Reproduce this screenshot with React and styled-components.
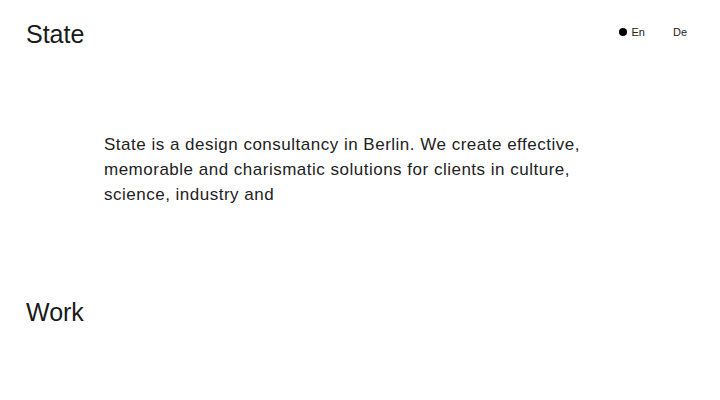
import React from "react";
import styled, { createGlobalStyle } from "styled-components";

const Global = createGlobalStyle`
  html, body { margin: 0; padding: 0; background: #fff; }
  body { font-family: "Liberation Sans", Arial, sans-serif; color: #1a1a1a; }
`;

const Page = styled.div`
  width: 720px;
  min-height: 400px;
  box-sizing: border-box;
  padding: 19px 33px 0 26px;
`;

const Header = styled.header`
  display: flex;
  justify-content: space-between;
  align-items: flex-start;
`;

const Logo = styled.h1`
  margin: 0;
  font-size: 25px;
  font-weight: 300;
  line-height: 30px;
`;

const Lang = styled.nav`
  display: flex;
  gap: 28px;
  padding-top: 7px;
  font-size: 11px;
  color: #222;
`;

const LangItem = styled.span`
  display: flex;
  align-items: center;
  gap: 4px;
  &::before {
    content: "";
    width: 8px;
    height: 8px;
    border-radius: 50%;
    background: #000;
    display: ${(p) => (p.$active ? "block" : "none")};
  }
`;

const Intro = styled.p`
  margin: 83px 0 0 78px;
  width: 500px;
  font-size: 17px;
  line-height: 25px;
  letter-spacing: 0.5px;
  color: #222;
`;

const Section = styled.h2`
  margin: 90px 0 0;
  font-size: 25px;
  font-weight: 300;
  line-height: 30px;
`;

export default function App() {
  return (
    <>
      <Global />
      <Page>
        <Header>
          <Logo>State</Logo>
          <Lang>
            <LangItem $active>En</LangItem>
            <LangItem>De</LangItem>
          </Lang>
        </Header>
        <Intro>
          State is a design consultancy in Berlin. We create effective, memorable and charismatic solutions for clients in culture, science, industry and
        </Intro>
        <Section>Work</Section>
      </Page>
    </>
  );
}
